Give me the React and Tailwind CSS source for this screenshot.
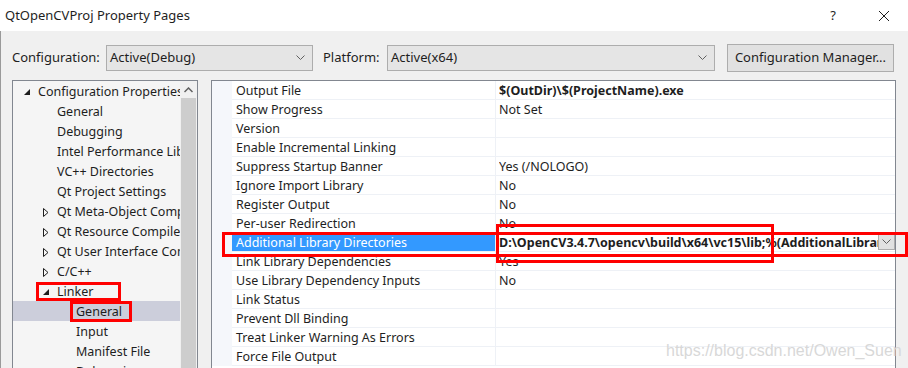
import React from 'react';

const font = { fontFamily: '"Noto Sans", "Open Sans", sans-serif' };

const Chevron = ({ className = '' }) => (
  <svg width="9" height="6" viewBox="0 0 9 6" className={className}>
    <polyline points="0.5,0.5 4.5,4.5 8.5,0.5" fill="none" stroke="#606060" strokeWidth="1" />
  </svg>
);

const Expanded = () => (
  <svg width="7" height="7" viewBox="0 0 7 7">
    <polygon points="6,0 6,6 0,6" fill="#1e1e1e" />
  </svg>
);

const Collapsed = () => (
  <svg width="6" height="9" viewBox="0 0 6 9">
    <polygon points="0.5,0.5 5,4.5 0.5,8.5" fill="none" stroke="#1e1e1e" strokeWidth="1" />
  </svg>
);

const treeItems = [
  { label: 'Configuration Properties', level: 0, icon: 'open' },
  { label: 'General', level: 1 },
  { label: 'Debugging', level: 1 },
  { label: 'Intel Performance Libraries', level: 1 },
  { label: 'VC++ Directories', level: 1 },
  { label: 'Qt Project Settings', level: 1 },
  { label: 'Qt Meta-Object Compiler', level: 1, icon: 'closed' },
  { label: 'Qt Resource Compiler', level: 1, icon: 'closed' },
  { label: 'Qt User Interface Compiler', level: 1, icon: 'closed' },
  { label: 'C/C++', level: 1, icon: 'closed' },
  { label: 'Linker', level: 1, icon: 'open' },
  { label: 'General', level: 2, selected: true },
  { label: 'Input', level: 2 },
  { label: 'Manifest File', level: 2 },
  { label: 'Debugging', level: 2 },
];

const props = [
  ['Output File', '$(OutDir)\\$(ProjectName).exe', true],
  ['Show Progress', 'Not Set'],
  ['Version', ''],
  ['Enable Incremental Linking', ''],
  ['Suppress Startup Banner', 'Yes (/NOLOGO)'],
  ['Ignore Import Library', 'No'],
  ['Register Output', 'No'],
  ['Per-user Redirection', 'No'],
  ['Additional Library Directories', 'D:\\OpenCV3.4.7\\opencv\\build\\x64\\vc15\\lib;%(AdditionalLibraryDirectories)', true, true],
  ['Link Library Dependencies', 'Yes'],
  ['Use Library Dependency Inputs', 'No'],
  ['Link Status', ''],
  ['Prevent Dll Binding', ''],
  ['Treat Linker Warning As Errors', ''],
  ['Force File Output', ''],
];

const indents = ['pl-[6px]', 'pl-[25px]', 'pl-[44px]'];

const TreeRow = ({ item }) => (
  <div className={`h-[20px] shrink-0 flex items-center whitespace-nowrap pt-[2px] ${indents[item.level]} ${item.selected ? 'bg-[#cccedb]' : ''}`}>
    <div className="w-[19px] shrink-0 flex items-center pl-[5px]">
      {item.icon === 'open' && <Expanded />}
      {item.icon === 'closed' && <Collapsed />}
    </div>
    <span>{item.label}</span>
  </div>
);

const PropRow = ({ name, value, bold, selected }) => (
  <div className="h-[19px] shrink-0 flex">
    <div className="w-[20px] shrink-0 bg-[#f5f7fb]" />
    <div className={`w-[264px] shrink-0 border-b border-r border-[#eef1f6] pl-[4px] pt-[3px] flex items-center whitespace-nowrap overflow-hidden ${selected ? 'bg-[#3399ff] text-white' : ''}`}>
      {name}
    </div>
    <div className="flex-1 min-w-0 border-b border-[#eef1f6] pl-[3px] flex items-center">
      <span className={`flex-1 min-w-0 overflow-hidden whitespace-nowrap pt-[3px] ${bold ? 'font-bold' : ''}`}>{value}</span>
      {selected && (
        <div className="w-[17px] h-[16px] shrink-0 bg-[#e1e1e1] border border-[#adadad] flex items-center justify-center">
          <Chevron />
        </div>
      )}
    </div>
  </div>
);

export default function App() {
  return (
    <div className="w-[908px] h-[368px] overflow-hidden relative bg-[#f0f0f0] text-[12.5px] text-[#1e1e1e]" style={font}>
      <div className="h-[31px] bg-white flex items-center pl-[5px] text-[13px]">
        <span className="flex-1">QtOpenCVProj Property Pages</span>
        <span className="mr-[42px]">?</span>
        <svg width="12" height="12" viewBox="0 0 12 12" className="mr-[18px]">
          <path d="M1 1 L11 11 M11 1 L1 11" stroke="#1e1e1e" strokeWidth="1" />
        </svg>
      </div>

      <div className="border-l border-[#9a9a9a] h-[337px] flex flex-col">
        <div className="h-[49px] shrink-0 flex items-start pt-[13px] pl-[11px] text-[13px]">
          <div className="flex items-center h-[28px]">
            <span className="w-[94px]">Configuration:</span>
            <div className="w-[207px] h-[26px] border border-[#adadad] bg-[#e5e5e5] flex items-center pl-[3px] pr-[7px]">
              <span className="flex-1">Active(Debug)</span>
              <Chevron />
            </div>
            <span className="w-[64px] ml-[10px]">Platform:</span>
            <div className="w-[328px] h-[26px] border border-[#adadad] bg-[#e5e5e5] flex items-center pl-[3px] pr-[7px]">
              <span className="flex-1">Active(x64)</span>
              <Chevron />
            </div>
            <div className="w-[167px] h-[28px] ml-[12px] border border-[#adadad] bg-[#e1e1e1] flex items-center justify-center">
              Configuration Manager...
            </div>
          </div>
        </div>

        <div className="flex-1 min-h-0 flex pl-[11px]">
          <div className="w-[186px] h-[300px] shrink-0 border border-[#828790] bg-[#f5f5f5] flex">
            <div className="flex-1 min-w-0 overflow-hidden flex flex-col">
              {treeItems.map((item, i) => (
                <TreeRow key={i} item={item} />
              ))}
            </div>
            <div className="w-[17px] shrink-0 bg-[#f0f0f0] flex flex-col">
              <div className="h-[17px] flex items-center justify-center">
                <svg width="9" height="6" viewBox="0 0 9 6">
                  <polyline points="0.5,5 4.5,1 8.5,5" fill="none" stroke="#606060" strokeWidth="1.5" />
                </svg>
              </div>
              <div className="flex-1 mx-[1px] bg-[#cdcdcd]" />
            </div>
          </div>

          <div className="w-[685px] h-[300px] shrink-0 ml-[13px] border border-[#828790] bg-white flex flex-col overflow-hidden">
            {props.map(([n, v, b, s], i) => (
              <PropRow key={i} name={n} value={v} bold={b} selected={s} />
            ))}
          </div>
        </div>
      </div>

      {/* watermark */}
      <div className="absolute left-[666px] top-[339px] text-[16px] text-[#d8d8d8]" style={{ fontFamily: '"Liberation Sans", Arial, sans-serif' }}>
        https://blog.csdn.net/Owen_Suen
      </div>

      {/* red annotation boxes */}
      <div className="absolute left-[36px] top-[282px] w-[85px] h-[19px] border-[3px] border-[#ff0000]" />
      <div className="absolute left-[70px] top-[301px] w-[62px] h-[21px] border-[3px] border-[#ff0000]" />
      <div className="absolute left-[222px] top-[232px] w-[686px] h-[25px] border-[3px] border-[#ff0000]" />
      <div className="absolute left-[496px] top-[224px] w-[278px] h-[39px] border-[3px] border-[#ff0000]" />
    </div>
  );
}
